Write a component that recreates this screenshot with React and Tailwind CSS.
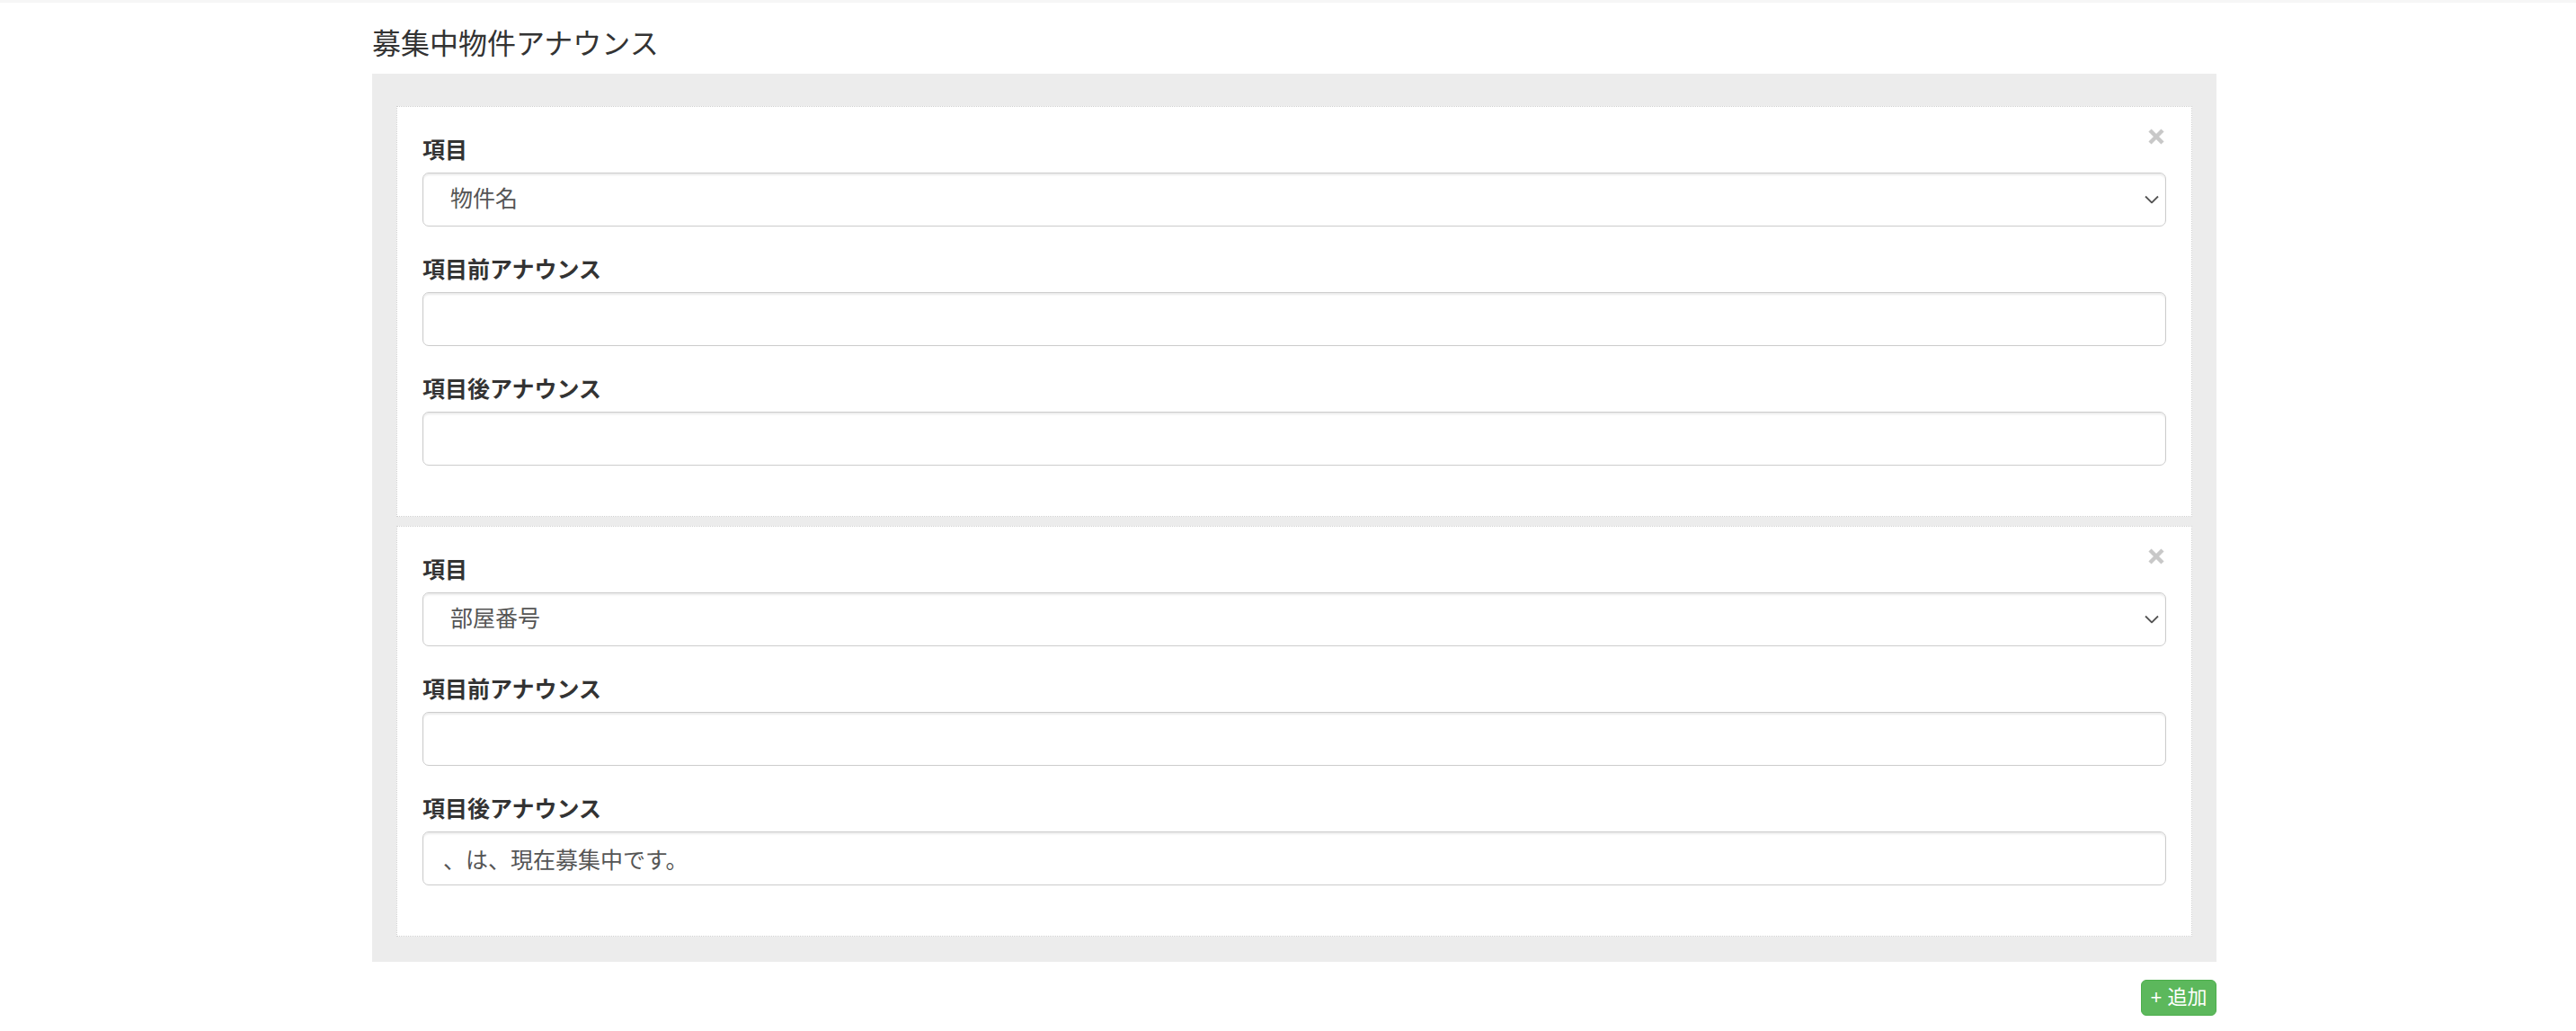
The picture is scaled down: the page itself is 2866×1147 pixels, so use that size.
import { useState } from 'react'

const FONT = '"Liberation Sans", "Noto Sans CJK JP", sans-serif'

const options = ['物件名', '部屋番号', '賃料', '間取り', '所在地']

function CloseIcon() {
  return (
    <svg width="18" height="18" viewBox="0 0 18 18">
      <path d="M2 2 L16 16 M16 2 L2 16" stroke="#c8c8c8" strokeWidth="4.5" strokeLinecap="butt" />
    </svg>
  )
}

function Chevron() {
  return (
    <svg width="16" height="9" viewBox="0 0 16 9" fill="none">
      <polyline points="1,1 8,8 15,1" stroke="#555" strokeWidth="1.8" />
    </svg>
  )
}

function Field({ label, children }) {
  return (
    <div className="mb-[28px]">
      <label className="block text-[25px] font-bold leading-[36px] pt-[2px] mb-[7px] text-[#333]">{label}</label>
      {children}
    </div>
  )
}

const inputCls =
  'block w-full h-[60px] border border-[#ccc] rounded-[7px] bg-white text-[25px] text-[#555] shadow-[inset_0_2px_2px_rgba(0,0,0,0.075)] outline-none'

function AnnounceCard({ item }) {
  const [field, setField] = useState(item.field)
  const [before, setBefore] = useState(item.before)
  const [after, setAfter] = useState(item.after)

  return (
    <div className="relative bg-white border border-dotted border-[#cfcfcf] px-[28px] pt-[28px] pb-[28px]">
      <button className="absolute right-[30px] top-[24px] leading-none">
        <CloseIcon />
      </button>

      <Field label="項目">
        <div className="relative">
          <select
            value={field}
            onChange={(e) => setField(e.target.value)}
            className={`${inputCls} appearance-none pl-[30px] pr-[40px]`}
          >
            {options.map((o) => (
              <option key={o} value={o}>{o}</option>
            ))}
          </select>
          <span className="absolute right-[8px] top-1/2 -translate-y-1/2 flex pointer-events-none">
            <Chevron />
          </span>
        </div>
      </Field>

      <Field label="項目前アナウンス">
        <input
          type="text"
          value={before}
          onChange={(e) => setBefore(e.target.value)}
          className={`${inputCls} px-[22px]`}
        />
      </Field>

      <Field label="項目後アナウンス">
        <input
          type="text"
          value={after}
          onChange={(e) => setAfter(e.target.value)}
          className={`${inputCls} px-[22px]`}
        />
      </Field>
    </div>
  )
}

export default function App() {
  const items = [
    { id: 1, field: '物件名', before: '', after: '' },
    { id: 2, field: '部屋番号', before: '', after: '、は、現在募集中です。' },
  ]

  return (
    <div className="min-h-screen bg-white" style={{ fontFamily: FONT }}>
      {/* top edge of the navbar */}
      <div className="h-[3px] bg-[#f6f6f6]" />

      <div className="ml-[414px] w-[2052px]">
        <h3 className="mt-[28px] mb-[15px] text-[32px] leading-[36px] font-normal text-[#333]">
          募集中物件アナウンス
        </h3>

        <div className="bg-[#ececec] pl-[27px] pr-[27px] pt-[36px] pb-[28px] flex flex-col gap-[10px]">
          {items.map((item) => (
            <AnnounceCard key={item.id} item={item} />
          ))}
        </div>

        <div className="flex justify-end mt-[20px]">
          <button className="w-[84px] h-[40px] bg-[#5cb85c] border border-[#4cae4c] rounded-[6px] text-white text-[22px] leading-none flex items-center justify-center gap-[6px]">
            <span>+</span>
            <span>追加</span>
          </button>
        </div>
      </div>
    </div>
  )
}
